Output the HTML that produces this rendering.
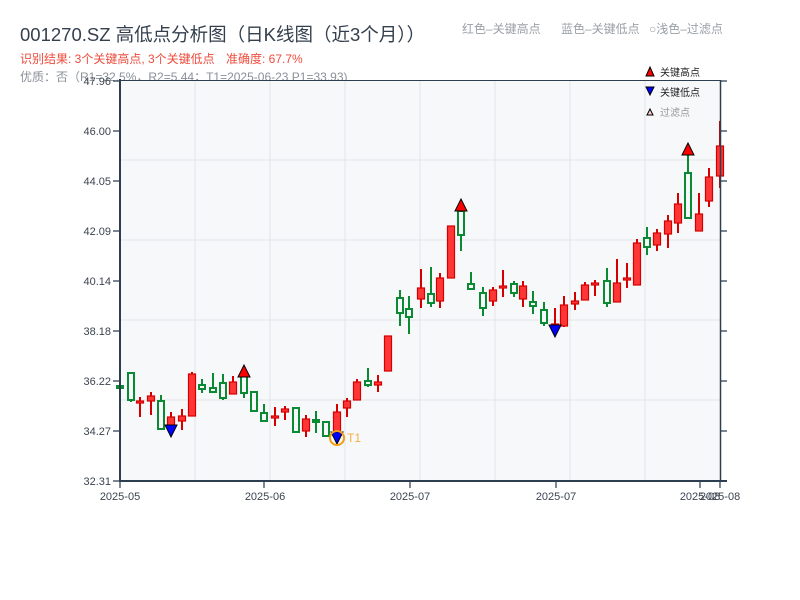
<!DOCTYPE html>
<html><head><meta charset="utf-8"><style>
html,body{margin:0;padding:0;background:#fff;width:800px;height:600px;overflow:hidden}
svg text{font-family:"Liberation Sans","Noto Sans CJK SC",sans-serif}
.g line,.g rect{stroke:#0a8a32;stroke-width:2}
.g rect{fill:#f6f8fa}
.r line{stroke:#d40000;stroke-width:2}
.r rect{fill:#ff3636;stroke:#d40000;stroke-width:1.2}
</style></head><body>
<svg width="800" height="600" viewBox="0 0 800 600" xmlns="http://www.w3.org/2000/svg">
<text x="20" y="41" font-size="18.5" fill="#34404e">001270.SZ 高低点分析图（日K线图（近3个月））</text>
<text x="462" y="33" font-size="12" fill="#9aa0a6">红色–关键高点</text>
<text x="561" y="33" font-size="12" fill="#9aa0a6">蓝色–关键低点</text>
<text x="649" y="33" font-size="12" fill="#9aa0a6">○浅色–过滤点</text>
<text x="20" y="63" font-size="12" fill="#ee4b3c">识别结果: 3个关键高点, 3个关键低点</text>
<text x="226" y="63" font-size="12" fill="#ee4b3c">准确度: 67.7%</text>
<text x="20" y="81" font-size="12" fill="#8a9098">优质：否（R1=32.5%，R2=5.44；T1=2025-06-23 P1=33.93)</text>
<rect x="120" y="80" width="600" height="401" fill="#f6f8fa"/>
<g stroke="#e1e4e9" stroke-width="1">
<line x1="120" y1="160" x2="720" y2="160"/><line x1="120" y1="240" x2="720" y2="240"/><line x1="120" y1="320" x2="720" y2="320"/><line x1="120" y1="400" x2="720" y2="400"/>
<line x1="195" y1="80" x2="195" y2="481"/><line x1="270" y1="80" x2="270" y2="481"/><line x1="345" y1="80" x2="345" y2="481"/><line x1="420" y1="80" x2="420" y2="481"/><line x1="495" y1="80" x2="495" y2="481"/><line x1="570" y1="80" x2="570" y2="481"/><line x1="645" y1="80" x2="645" y2="481"/>
</g>
<g class="g"><line x1="120" y1="385" x2="120" y2="390"/><rect x="117" y="386" width="6" height="2"/></g>
<g class="g"><line x1="131" y1="373" x2="131" y2="402"/><rect x="128" y="373" width="6" height="27"/></g>
<g class="r"><line x1="140" y1="397" x2="140" y2="417"/><rect x="136.5" y="401" width="7" height="2"/></g>
<g class="r"><line x1="151" y1="392" x2="151" y2="415"/><rect x="147.5" y="396" width="7" height="5"/></g>
<g class="g"><line x1="161" y1="395" x2="161" y2="429"/><rect x="158" y="401" width="6" height="28"/></g>
<g class="r"><line x1="171" y1="412" x2="171" y2="427"/><rect x="167.5" y="417" width="7" height="9"/></g>
<g class="r"><line x1="182" y1="409" x2="182" y2="430"/><rect x="178.5" y="416" width="7" height="5"/></g>
<g class="r"><line x1="192" y1="372" x2="192" y2="416"/><rect x="188.5" y="374" width="7" height="42"/></g>
<g class="g"><line x1="202" y1="379" x2="202" y2="393"/><rect x="199" y="385" width="6" height="4"/></g>
<g class="g"><line x1="213" y1="373" x2="213" y2="393"/><rect x="210" y="388" width="6" height="4"/></g>
<g class="g"><line x1="223" y1="374" x2="223" y2="400"/><rect x="220" y="383" width="6" height="15"/></g>
<g class="r"><line x1="233" y1="376" x2="233" y2="394"/><rect x="229.5" y="382" width="7" height="12"/></g>
<g class="g"><line x1="244" y1="376" x2="244" y2="398"/><rect x="241" y="376" width="6" height="17"/></g>
<g class="g"><line x1="254" y1="392" x2="254" y2="411"/><rect x="251" y="392" width="6" height="19"/></g>
<g class="g"><line x1="264" y1="404" x2="264" y2="422"/><rect x="261" y="413" width="6" height="8"/></g>
<g class="r"><line x1="275" y1="407" x2="275" y2="426"/><rect x="271.5" y="416" width="7" height="2"/></g>
<g class="r"><line x1="285" y1="406" x2="285" y2="420"/><rect x="281.5" y="409" width="7" height="3"/></g>
<g class="g"><line x1="296" y1="408" x2="296" y2="432"/><rect x="293" y="408" width="6" height="24"/></g>
<g class="r"><line x1="306" y1="415" x2="306" y2="437"/><rect x="302.5" y="419" width="7" height="12"/></g>
<g class="g"><line x1="316" y1="411" x2="316" y2="433"/><rect x="313" y="420" width="6" height="2"/></g>
<g class="g"><line x1="326" y1="422" x2="326" y2="436"/><rect x="323" y="422" width="6" height="14"/></g>
<g class="r"><line x1="337" y1="404" x2="337" y2="437"/><rect x="333.5" y="412" width="7" height="22"/></g>
<g class="r"><line x1="347" y1="398" x2="347" y2="417"/><rect x="343.5" y="401" width="7" height="7"/></g>
<g class="r"><line x1="357" y1="379" x2="357" y2="400"/><rect x="353.5" y="382" width="7" height="18"/></g>
<g class="g"><line x1="368" y1="368" x2="368" y2="387"/><rect x="365" y="381" width="6" height="4"/></g>
<g class="r"><line x1="378" y1="375" x2="378" y2="392"/><rect x="374.5" y="382" width="7" height="3"/></g>
<g class="r"><line x1="388" y1="336" x2="388" y2="371"/><rect x="384.5" y="336" width="7" height="35"/></g>
<g class="g"><line x1="400" y1="290" x2="400" y2="326"/><rect x="397" y="298" width="6" height="15"/></g>
<g class="g"><line x1="409" y1="296" x2="409" y2="334"/><rect x="406" y="309" width="6" height="8"/></g>
<g class="r"><line x1="421" y1="269" x2="421" y2="308"/><rect x="417.5" y="288" width="7" height="11"/></g>
<g class="g"><line x1="431" y1="267" x2="431" y2="307"/><rect x="428" y="294" width="6" height="9"/></g>
<g class="r"><line x1="440" y1="273" x2="440" y2="308"/><rect x="436.5" y="278" width="7" height="23"/></g>
<g class="r"><line x1="451" y1="226" x2="451" y2="278"/><rect x="447.5" y="226" width="7" height="52"/></g>
<g class="g"><line x1="461" y1="211" x2="461" y2="251"/><rect x="458" y="211" width="6" height="24"/></g>
<g class="g"><line x1="471" y1="272" x2="471" y2="289"/><rect x="468" y="284" width="6" height="5"/></g>
<g class="g"><line x1="483" y1="287" x2="483" y2="316"/><rect x="480" y="293" width="6" height="15"/></g>
<g class="r"><line x1="493" y1="287" x2="493" y2="306"/><rect x="489.5" y="290" width="7" height="11"/></g>
<g class="r"><line x1="503" y1="270" x2="503" y2="297"/><rect x="499.5" y="286" width="7" height="2"/></g>
<g class="g"><line x1="514" y1="281" x2="514" y2="297"/><rect x="511" y="284" width="6" height="9"/></g>
<g class="r"><line x1="523" y1="281" x2="523" y2="307"/><rect x="519.5" y="286" width="7" height="13"/></g>
<g class="g"><line x1="533" y1="291" x2="533" y2="314"/><rect x="530" y="302" width="6" height="4"/></g>
<g class="g"><line x1="544" y1="302" x2="544" y2="326"/><rect x="541" y="310" width="6" height="13"/></g>
<g class="r"><line x1="555" y1="308" x2="555" y2="326"/><rect x="551.5" y="324" width="7" height="2"/></g>
<g class="r"><line x1="564" y1="296" x2="564" y2="327"/><rect x="560.5" y="305" width="7" height="21"/></g>
<g class="r"><line x1="575" y1="292" x2="575" y2="310"/><rect x="571.5" y="301" width="7" height="3"/></g>
<g class="r"><line x1="585" y1="282" x2="585" y2="300"/><rect x="581.5" y="285" width="7" height="15"/></g>
<g class="r"><line x1="595" y1="280" x2="595" y2="296"/><rect x="591.5" y="283" width="7" height="2"/></g>
<g class="g"><line x1="607" y1="268" x2="607" y2="307"/><rect x="604" y="281" width="6" height="22"/></g>
<g class="r"><line x1="617" y1="259" x2="617" y2="302"/><rect x="613.5" y="283" width="7" height="19"/></g>
<g class="r"><line x1="627" y1="263" x2="627" y2="288"/><rect x="623.5" y="278" width="7" height="2"/></g>
<g class="r"><line x1="637" y1="239" x2="637" y2="285"/><rect x="633.5" y="243" width="7" height="42"/></g>
<g class="g"><line x1="647" y1="227" x2="647" y2="255"/><rect x="644" y="238" width="6" height="9"/></g>
<g class="r"><line x1="657" y1="229" x2="657" y2="251"/><rect x="653.5" y="233" width="7" height="12"/></g>
<g class="r"><line x1="668" y1="215" x2="668" y2="248"/><rect x="664.5" y="221" width="7" height="13"/></g>
<g class="r"><line x1="678" y1="193" x2="678" y2="233"/><rect x="674.5" y="204" width="7" height="19"/></g>
<g class="g"><line x1="688" y1="155" x2="688" y2="219"/><rect x="685" y="173" width="6" height="45"/></g>
<g class="r"><line x1="699" y1="193" x2="699" y2="231"/><rect x="695.5" y="214" width="7" height="17"/></g>
<g class="r"><line x1="709" y1="168" x2="709" y2="207"/><rect x="705.5" y="177" width="7" height="24"/></g>
<g class="r"><line x1="720" y1="121" x2="720" y2="188"/><rect x="716.5" y="146" width="7" height="30"/></g>
<g stroke="#000" stroke-width="1">
<polygon points="238,377 250,377 244,365" fill="#f00"/>
<polygon points="455,211 467,211 461,199" fill="#f00"/>
<polygon points="682,155 694,155 688,143" fill="#f00"/>
<polygon points="165,425 177,425 171,437" fill="#00f"/>
<polygon points="331,432 343,432 337,444" fill="#00f"/>
<polygon points="549,325 561,325 555,337" fill="#00f"/>
</g>
<circle cx="337" cy="438" r="7" fill="none" stroke="#f39c12" stroke-width="2"/>
<text x="347" y="442" font-size="12" fill="#f5b041">T1</text>
<g stroke="#2c3e50" fill="none">
<line x1="120" y1="80.5" x2="720" y2="80.5" stroke-width="1"/>
<line x1="120" y1="79" x2="120" y2="482" stroke-width="2"/>
<line x1="119" y1="481" x2="727" y2="481" stroke-width="2"/>
<line x1="720.5" y1="80" x2="720.5" y2="481" stroke-width="1.5"/>
<path d="M113 81H120M113 131H120M113 181H120M113 231H120M113 281H120M113 331H120M113 381H120M113 431H120M113 481H120M720 81H727M720 131H727M720 181H727M720 231H727M720 281H727M720 331H727M720 381H727M720 431H727M120 481V488M264 481V488M410 481V488M556 481V488M700 481V488M720 481V488" stroke-width="1.2"/>
</g>
<g font-size="11" fill="#3c4450" text-anchor="end">
<text x="111" y="85">47.96</text><text x="111" y="135">46.00</text><text x="111" y="185">44.05</text><text x="111" y="235">42.09</text><text x="111" y="285">40.14</text><text x="111" y="335">38.18</text><text x="111" y="385">36.22</text><text x="111" y="435">34.27</text><text x="111" y="485">32.31</text>
</g>
<g font-size="11" fill="#3c4450" text-anchor="middle">
<text x="120" y="500">2025-05</text><text x="265" y="500">2025-06</text><text x="410" y="500">2025-07</text><text x="556" y="500">2025-07</text><text x="700" y="500">2025-08</text><text x="720" y="500">2025-08</text>
</g>
<polygon points="646,76 654,76 650,67" fill="#f00" stroke="#000" stroke-width="1"/>
<text x="660" y="76" font-size="10" fill="#222">关键高点</text>
<polygon points="646,87 654,87 650,95" fill="#00f" stroke="#000" stroke-width="1"/>
<text x="660" y="96" font-size="10" fill="#222">关键低点</text>
<polygon points="647,115 653,115 650,109" fill="#fcc" stroke="#000" stroke-width="1"/>
<text x="660" y="116" font-size="10" fill="#999">过滤点</text>
</svg>
</body></html>
